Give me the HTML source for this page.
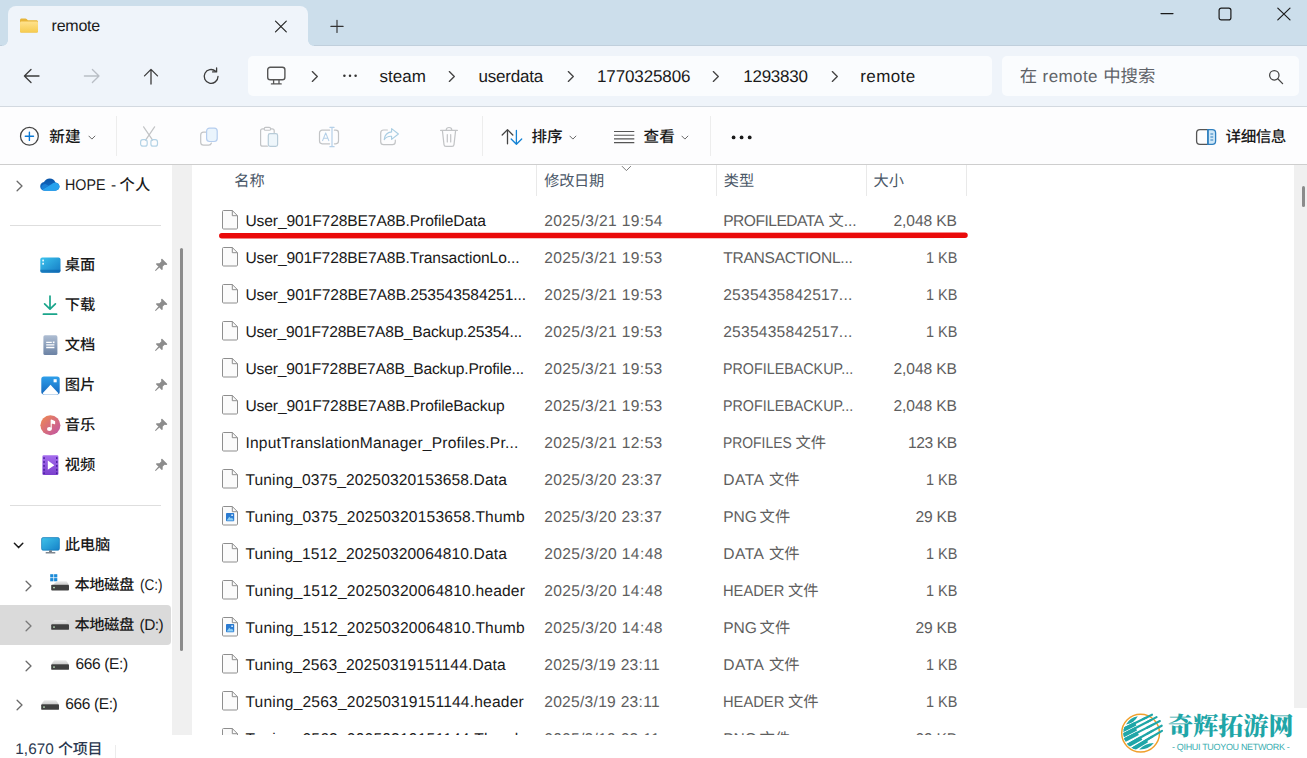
<!DOCTYPE html>
<html lang="zh-CN"><head><meta charset="utf-8"><title>remote - File Explorer</title>
<style>
html,body{margin:0;padding:0}
body{width:1307px;height:758px;overflow:hidden;position:relative;background:#fff;font-family:"Liberation Sans",sans-serif;color:#1a1a1a;text-rendering:geometricPrecision;-webkit-font-smoothing:antialiased}
.a{position:absolute}
.t{position:absolute;white-space:nowrap;line-height:1}
svg{display:block}
.mix{position:absolute;white-space:nowrap;line-height:1}
.c4{font-family:"Liberation Sans","Noto Sans CJK SC",sans-serif;font-weight:400}
.c5{font-family:"Liberation Sans","Noto Sans CJK SC",sans-serif;font-weight:500}
.cs{font-family:"Liberation Serif","Noto Serif CJK SC",serif;font-weight:900}
</style></head>
<body>
<svg width="0" height="0" style="position:absolute" aria-hidden="true"><defs>
<linearGradient id="gfold" x1="0" y1="0" x2="0" y2="1"><stop offset="0" stop-color="#ffe28e"/><stop offset="1" stop-color="#f6cb4e"/></linearGradient>
</defs></svg>
<div class="a" style="left:0px;top:0px;width:1307px;height:46px;background:#ccdeeb;"></div>
<div class="a" style="left:0px;top:46px;width:1307px;height:60px;background:#eff4fa;"></div>
<div class="a" style="left:8px;top:6px;width:300px;height:41px;background:#eff4fa;border-radius:8px 8px 0 0"></div>
<div class="a" style="left:2px;top:40px;width:6px;height:6px;background:radial-gradient(circle at 0 0,rgba(0,0,0,0) 5.6px,#eff4fa 6.2px)"></div>
<div class="a" style="left:308px;top:40px;width:6px;height:6px;background:radial-gradient(circle at 100% 0,rgba(0,0,0,0) 5.6px,#eff4fa 6.2px)"></div>
<div class="a" style="left:314px;top:45px;width:993px;height:1px;background:#c0cfdc;"></div>
<div class="a" style="left:0px;top:45px;width:2px;height:1px;background:#c0cfdc;"></div>
<svg class="a" aria-hidden="true" style="left:20px;top:18px;" width="18" height="15" viewBox="0 0 18 15"><path d="M0 2.1C0 1.2.7.5 1.6.5H5.4C5.9.5 6.3.7 6.6 1L7.9 2.3H16.4C17.3 2.3 18 3 18 3.9V13C18 13.9 17.3 14.6 16.4 14.6H1.6C.7 14.6 0 13.9 0 13Z" fill="#e7b53a"/><path d="M0 4.7C0 4 .6 3.4 1.3 3.4H16.7C17.4 3.4 18 4 18 4.7V13.2C18 14 17.4 14.6 16.6 14.6H1.4C.6 14.6 0 14 0 13.2Z" fill="url(#gfold)"/></svg>
<div class="t" style="top:18.96px;font-size:16px;color:#1a1a1a;letter-spacing:-0.249px;left:51.60px;">remote</div>
<svg class="a" aria-hidden="true" style="left:274px;top:20px;" width="14" height="13" viewBox="0 0 14 13"><path d="M1.5 1.2L12.3 11.8M12.3 1.2L1.5 11.8" stroke="#222" stroke-width="1.15" fill="none" stroke-linecap="round"/></svg>
<svg class="a" aria-hidden="true" style="left:330px;top:19px;" width="14" height="15" viewBox="0 0 14 15"><path d="M7 1.3V13.5M.9 7.4H13.1" stroke="#333" stroke-width="1.15" fill="none" stroke-linecap="round"/></svg>
<svg class="a" aria-hidden="true" style="left:1158px;top:6px;" width="16" height="16" viewBox="0 0 16 16"><path d="M3 7.6H15" stroke="#1a1a1a" stroke-width="1.2" fill="none" stroke-linecap="round"/></svg>
<svg class="a" aria-hidden="true" style="left:1217px;top:6px;" width="16" height="16" viewBox="0 0 16 16"><rect x="2.1" y="2.1" width="11.8" height="11.8" rx="2.2" stroke="#1a1a1a" stroke-width="1.2" fill="none"/></svg>
<svg class="a" aria-hidden="true" style="left:1276px;top:6px;" width="16" height="16" viewBox="0 0 16 16"><path d="M1.8 2.1L14 13.9M14 2.1L1.8 13.9" stroke="#1a1a1a" stroke-width="1.2" fill="none" stroke-linecap="round"/></svg>
<svg class="a" aria-hidden="true" style="left:22px;top:67px;" width="20" height="18" viewBox="0 0 20 18"><path d="M2.4 9H17M9 2.5L2.4 9L9 15.5" stroke="#3b3b3b" stroke-width="1.3" fill="none" stroke-linecap="round" stroke-linejoin="round"/></svg>
<svg class="a" aria-hidden="true" style="left:82px;top:67px;" width="20" height="18" viewBox="0 0 20 18"><path d="M2.4 9H17M10.4 2.5L17 9L10.4 15.5" stroke="#b9bec5" stroke-width="1.3" fill="none" stroke-linecap="round" stroke-linejoin="round"/></svg>
<svg class="a" aria-hidden="true" style="left:142px;top:67px;" width="18" height="18" viewBox="0 0 18 18"><path d="M9 2.4V17M2.5 8.9L9 2.4L15.5 8.9" stroke="#3b3b3b" stroke-width="1.3" fill="none" stroke-linecap="round" stroke-linejoin="round"/></svg>
<svg class="a" aria-hidden="true" style="left:201px;top:66px;" width="20" height="20" viewBox="0 0 20 20"><path d="M17 10.5A6.9 6.9 0 1 1 14.6 5.2" stroke="#3b3b3b" stroke-width="1.3" fill="none" stroke-linecap="round"/><path d="M15.6 1.9V5.9H11.6" stroke="#3b3b3b" stroke-width="1.3" fill="none" stroke-linecap="round" stroke-linejoin="round"/></svg>
<div class="a" style="left:248px;top:56px;width:744px;height:40px;background:#fafcfe;border-radius:5px"></div>
<div class="a" style="left:1002px;top:56px;width:297px;height:40px;background:#fafcfe;border-radius:5px"></div>
<svg class="a" aria-hidden="true" style="left:266px;top:65px;" width="21" height="21" viewBox="0 0 21 21"><rect x="1.7" y="2.2" width="17.2" height="12.6" rx="2.6" stroke="#555" stroke-width="1.4" fill="none"/><path d="M7.6 15V18.6M13 15V18.6M5.4 18.9H15.2" stroke="#555" stroke-width="1.3" fill="none" stroke-linecap="round"/></svg>
<svg class="a" aria-hidden="true" style="left:310.5px;top:70px;" width="8" height="13" viewBox="0 0 8 13"><path d="M1.3 1.6L6.3 6.5L1.3 11.4" stroke="#444" stroke-width="1.35" fill="none" stroke-linecap="round" stroke-linejoin="round"/></svg>
<svg class="a" aria-hidden="true" style="left:448.3px;top:70px;" width="8" height="13" viewBox="0 0 8 13"><path d="M1.3 1.6L6.3 6.5L1.3 11.4" stroke="#444" stroke-width="1.35" fill="none" stroke-linecap="round" stroke-linejoin="round"/></svg>
<svg class="a" aria-hidden="true" style="left:566.5px;top:70px;" width="8" height="13" viewBox="0 0 8 13"><path d="M1.3 1.6L6.3 6.5L1.3 11.4" stroke="#444" stroke-width="1.35" fill="none" stroke-linecap="round" stroke-linejoin="round"/></svg>
<svg class="a" aria-hidden="true" style="left:712.3px;top:70px;" width="8" height="13" viewBox="0 0 8 13"><path d="M1.3 1.6L6.3 6.5L1.3 11.4" stroke="#444" stroke-width="1.35" fill="none" stroke-linecap="round" stroke-linejoin="round"/></svg>
<svg class="a" aria-hidden="true" style="left:830.8px;top:70px;" width="8" height="13" viewBox="0 0 8 13"><path d="M1.3 1.6L6.3 6.5L1.3 11.4" stroke="#444" stroke-width="1.35" fill="none" stroke-linecap="round" stroke-linejoin="round"/></svg>
<svg class="a" aria-hidden="true" style="left:341px;top:72px;" width="18" height="8" viewBox="0 0 18 8"><circle cx="3.4" cy="3.8" r="1.25" fill="#333"/><circle cx="9" cy="3.8" r="1.25" fill="#333"/><circle cx="14.6" cy="3.8" r="1.25" fill="#333"/></svg>
<div class="t" style="top:67.51px;font-size:17px;color:#1a1a1a;letter-spacing:-0.019px;left:379.60px;">steam</div>
<div class="t" style="top:67.51px;font-size:17px;color:#1a1a1a;letter-spacing:-0.195px;left:478.40px;">userdata</div>
<div class="t" style="top:67.51px;font-size:17px;color:#1a1a1a;letter-spacing:-0.125px;left:597.00px;">1770325806</div>
<div class="t" style="top:67.51px;font-size:17px;color:#1a1a1a;letter-spacing:-0.226px;left:743.20px;">1293830</div>
<div class="t" style="top:67.51px;font-size:17px;color:#1a1a1a;letter-spacing:0.415px;left:860.20px;">remote</div>
<div class="t c4" style="left:1019.80px;top:68.00px;font-size:17.4px;color:#5f6368;">在</div>
<div class="t" style="top:67.51px;font-size:17px;color:#5f6368;letter-spacing:0.415px;left:1042.60px;">remote</div>
<div class="t c4" style="left:1103.20px;top:68.00px;font-size:17.4px;color:#5f6368;">中搜索</div>
<svg class="a" aria-hidden="true" style="left:1267px;top:68px;" width="18" height="18" viewBox="0 0 18 18"><circle cx="7.3" cy="7.3" r="4.7" stroke="#444" stroke-width="1.25" fill="none"/><path d="M10.8 10.8L15.6 15.6" stroke="#444" stroke-width="1.3" stroke-linecap="round"/></svg>
<div class="a" style="left:0px;top:106px;width:1307px;height:1px;background:#d3d9e0;"></div>
<div class="a" style="left:0px;top:107px;width:1307px;height:57px;background:#fdfdfe;"></div>
<div class="a" style="left:0px;top:164px;width:1307px;height:1px;background:#cecece;"></div>
<svg class="a" aria-hidden="true" style="left:19px;top:126px;" width="21" height="21" viewBox="0 0 21 21"><circle cx="10.4" cy="10.3" r="8.9" stroke="#444" stroke-width="1.25" fill="none"/><path d="M10.4 6.2V14.4M6.3 10.3H14.5" stroke="#0a78d4" stroke-width="1.4" stroke-linecap="round" fill="none"/></svg>
<div class="t c5" style="left:49.30px;top:129.90px;font-size:15.6px;color:#1a1a1a;">新建</div>
<svg class="a" aria-hidden="true" style="left:87.5px;top:134.6px;" width="8" height="6" viewBox="0 0 8 6"><path d="M.9 1.1L3.9 4.1L6.9 1.1" stroke="#6a6a6a" stroke-width="1" fill="none" stroke-linecap="round" stroke-linejoin="round"/></svg>
<div class="a" style="left:116px;top:116px;width:1px;height:40px;background:#ededed;"></div>
<svg class="a" aria-hidden="true" style="left:139px;top:125px;" width="20" height="23" viewBox="0 0 20 23"><path d="M4.6 1.8L13.6 15.2M15.6 1.8L6.6 15.2" stroke="#c2c4c6" stroke-width="1.2" fill="none" stroke-linecap="round"/>
<rect x="1.6" y="14.6" width="6.6" height="6.6" rx="2.3" stroke="#b4d3e6" stroke-width="1.2" fill="none"/>
<rect x="11.9" y="14.6" width="6.6" height="6.6" rx="2.3" stroke="#b4d3e6" stroke-width="1.2" fill="none"/></svg>
<svg class="a" aria-hidden="true" style="left:199px;top:126px;" width="20" height="21" viewBox="0 0 20 21"><path d="M6.6 6.2H4.6C3 6.2 1.7 7.5 1.7 9.1V16.3C1.7 17.9 3 19.2 4.6 19.2H9.6C11 19.2 12.1 18.3 12.4 17" stroke="#c2c4c6" stroke-width="1.2" fill="none" stroke-linecap="round"/>
<rect x="7.6" y="2.1" width="10.6" height="13.4" rx="3" stroke="#b5cdee" stroke-width="1.2" fill="#eaf4fc"/></svg>
<svg class="a" aria-hidden="true" style="left:259px;top:126px;" width="20" height="22" viewBox="0 0 20 22"><path d="M8.4 20.2H3.6C2.5 20.2 1.6 19.3 1.6 18.2V4.8C1.6 3.7 2.5 2.8 3.6 2.8H5.2M11.6 2.8H13.2C14.3 2.8 15.2 3.7 15.2 4.8V6.6" stroke="#c2c4c6" stroke-width="1.2" fill="none" stroke-linecap="round"/>
<rect x="5.2" y="1.4" width="6.4" height="2.9" rx="1.4" stroke="#c2c4c6" stroke-width="1.1" fill="none"/>
<rect x="9.3" y="7.6" width="9.3" height="12.7" rx="1.8" stroke="#b7cbd8" stroke-width="1.2" fill="#eef6fb"/></svg>
<svg class="a" aria-hidden="true" style="left:318px;top:126px;" width="22" height="22" viewBox="0 0 22 22"><path d="M11.6 4.2H4.2C2.7 4.2 1.5 5.4 1.5 6.9V15.1C1.5 16.6 2.7 17.8 4.2 17.8H11.6M16.4 4.2H17.8C19.3 4.2 20.5 5.4 20.5 6.9V15.1C20.5 16.6 19.3 17.8 17.8 17.8H16.4" stroke="#c2c4c6" stroke-width="1.2" fill="none" stroke-linecap="round"/>
<path d="M14 1.4V20.6M11.9 1.3H16.1M11.9 20.7H16.1" stroke="#b5d0e8" stroke-width="1.2" fill="none" stroke-linecap="round"/>
<path d="M4.6 14.6L7.7 6.9L10.8 14.6M5.6 12.2H9.8" stroke="#b5d0e8" stroke-width="1.1" fill="none" stroke-linecap="round" stroke-linejoin="round"/></svg>
<svg class="a" aria-hidden="true" style="left:379px;top:127px;" width="22" height="20" viewBox="0 0 22 20"><path d="M8.4 3H4.6C3 3 1.7 4.3 1.7 5.9V14.7C1.7 16.3 3 17.6 4.6 17.6H13.4C15 17.6 16.3 16.3 16.3 14.7V13.2" stroke="#c2c4c6" stroke-width="1.2" fill="none" stroke-linecap="round"/>
<path d="M12.6 1.6L19.4 7L12.6 12.4V9.3C9 9.1 6.8 10.3 5.2 12.6C5.6 8.4 8 5.4 12.6 4.9Z" stroke="#a9cde2" stroke-width="1.1" fill="none" stroke-linejoin="round"/></svg>
<svg class="a" aria-hidden="true" style="left:439px;top:126px;" width="20" height="22" viewBox="0 0 20 22"><path d="M1.6 4.4H18.4M7.2 4.2C7.2 2.6 8.4 1.5 10 1.5C11.6 1.5 12.8 2.6 12.8 4.2" stroke="#c2c4c6" stroke-width="1.2" fill="none" stroke-linecap="round"/>
<path d="M3.4 4.6L5 18.6C5.1 19.7 6 20.4 7 20.4H13C14 20.4 14.9 19.7 15 18.6L16.6 4.6" stroke="#c2c4c6" stroke-width="1.2" fill="none" stroke-linecap="round" stroke-linejoin="round"/>
<path d="M8.3 8.6V16M11.7 8.6V16" stroke="#c2c4c6" stroke-width="1.2" fill="none" stroke-linecap="round"/></svg>
<div class="a" style="left:482px;top:116px;width:1px;height:40px;background:#ededed;"></div>
<svg class="a" aria-hidden="true" style="left:500px;top:128px;" width="24" height="18" viewBox="0 0 24 18"><path d="M7.5 15.8V1.8M2.2 7L7.5 1.6L12.8 7" stroke="#444" stroke-width="1.3" fill="none" stroke-linecap="round" stroke-linejoin="round"/>
<path d="M16.4 2.4V16.2M11.2 11L16.4 16.3L21.7 11" stroke="#1482d4" stroke-width="1.3" fill="none" stroke-linecap="round" stroke-linejoin="round"/></svg>
<div class="t c5" style="left:531.50px;top:129.90px;font-size:15.6px;color:#1a1a1a;">排序</div>
<svg class="a" aria-hidden="true" style="left:569.2px;top:134.6px;" width="8" height="6" viewBox="0 0 8 6"><path d="M.9 1.1L3.9 4.1L6.9 1.1" stroke="#6a6a6a" stroke-width="1" fill="none" stroke-linecap="round" stroke-linejoin="round"/></svg>
<svg class="a" aria-hidden="true" style="left:613px;top:130px;" width="22" height="14" viewBox="0 0 22 14"><path d="M1 1.5H21.3M1 5.2H21.3M1 8.9H21.3M1 12.6H21.3" stroke="#555" stroke-width="1.15" fill="none"/></svg>
<div class="t c5" style="left:643.60px;top:129.90px;font-size:15.6px;color:#1a1a1a;">查看</div>
<svg class="a" aria-hidden="true" style="left:680.8px;top:134.6px;" width="8" height="6" viewBox="0 0 8 6"><path d="M.9 1.1L3.9 4.1L6.9 1.1" stroke="#6a6a6a" stroke-width="1" fill="none" stroke-linecap="round" stroke-linejoin="round"/></svg>
<div class="a" style="left:710px;top:116px;width:1px;height:40px;background:#ededed;"></div>
<svg class="a" aria-hidden="true" style="left:730px;top:134px;" width="24" height="7" viewBox="0 0 24 7"><circle cx="3.6" cy="3.4" r="1.9" fill="#1a1a1a"/><circle cx="11.6" cy="3.4" r="1.9" fill="#1a1a1a"/><circle cx="19.7" cy="3.4" r="1.9" fill="#1a1a1a"/></svg>
<svg class="a" aria-hidden="true" style="left:1195px;top:128px;" width="22" height="18" viewBox="0 0 22 18"><rect x="13" y="1.8" width="7.6" height="14.4" fill="#cfe7f7"/>
<path d="M13 1.6H5C3.1 1.6 1.6 3.1 1.6 5V13C1.6 14.9 3.1 16.4 5 16.4H13" stroke="#555" stroke-width="1.3" fill="none"/>
<path d="M12.9 1.6H17.2C19.1 1.6 20.6 3.1 20.6 5V13C20.6 14.9 19.1 16.4 17.2 16.4H12.9Z" stroke="#2f7fbf" stroke-width="1.3" fill="none"/>
<path d="M12.9 1.6V16.4" stroke="#2f7fbf" stroke-width="1.5"/>
<path d="M15.4 6H18.2M15.4 9H18.2M15.4 12H18.2" stroke="#2f7fbf" stroke-width="1.1"/></svg>
<div class="t c5" style="left:1225.60px;top:129.90px;font-size:15.6px;color:#1a1a1a;letter-spacing:-0.546px;">详细信息</div>
<div class="a" style="left:172px;top:165px;width:20px;height:570px;background:#f0f0f0;"></div>
<div class="a" style="left:180px;top:248px;width:3px;height:403px;background:#8b8b8b;border-radius:1.5px"></div>
<svg width="0" height="0" style="position:absolute" aria-hidden="true"><defs>
<linearGradient id="gcloud" x1="0" y1="0" x2="0" y2="1"><stop offset="0" stop-color="#0a55a8"/><stop offset="1" stop-color="#1472cc"/></linearGradient>
<linearGradient id="gdesk" x1="0" y1="0" x2="1" y2="1"><stop offset="0" stop-color="#3cc4ee"/><stop offset="1" stop-color="#147ac4"/></linearGradient>
<linearGradient id="gdoc" x1="0" y1="0" x2="0" y2="1"><stop offset="0" stop-color="#aebdd2"/><stop offset="1" stop-color="#6b82a4"/></linearGradient>
<linearGradient id="gpic" x1="0" y1="0" x2="0" y2="1"><stop offset="0" stop-color="#2e9fea"/><stop offset="1" stop-color="#1468bf"/></linearGradient>
<linearGradient id="gmus" x1="0" y1="0" x2="1" y2="1"><stop offset="0" stop-color="#f08a4e"/><stop offset="1" stop-color="#bf52a8"/></linearGradient>
<linearGradient id="gvid" x1="0" y1="0" x2="0" y2="1"><stop offset="0" stop-color="#a56cee"/><stop offset="1" stop-color="#7a3fcc"/></linearGradient>
<linearGradient id="gpc" x1="0" y1="0" x2="1" y2="1"><stop offset="0" stop-color="#3fc3ea"/><stop offset="1" stop-color="#1581c8"/></linearGradient>
<linearGradient id="gdrv" x1="0" y1="0" x2="0" y2="1"><stop offset="0" stop-color="#ececec"/><stop offset="1" stop-color="#cbcbcb"/></linearGradient>
</defs></svg>
<svg class="a" aria-hidden="true" style="left:15.8px;top:179.6px;" width="8" height="12" viewBox="0 0 8 12"><path d="M1.1 1.2L6 6L1.1 10.8" stroke="#6b6b6b" stroke-width="1.3" fill="none" stroke-linecap="round" stroke-linejoin="round"/></svg>
<svg class="a" aria-hidden="true" style="left:39.7px;top:177.7px;" width="20" height="13.33" viewBox="0 0 21 14"><path d="M5 13.4C2.3 13.4 .2 11.4 .2 8.8C.2 6.5 1.9 4.6 4.2 4.3C5.2 2 7.5 .4 10.2 .4C13 .4 15.3 2.1 16.2 4.6C18.6 4.8 20.5 6.7 20.5 9C20.5 11.4 18.5 13.4 16 13.4Z" fill="url(#gcloud)"/><path d="M2.6 12.2L12 6.6C13 5.4 14.4 4.7 16.2 4.6C18.6 4.8 20.5 6.7 20.5 9C20.5 11.4 18.5 13.4 16 13.4H5C4 13.4 3.2 13 2.6 12.2Z" fill="#27a2ee"/><path d="M2.6 12.2L9.2 8.2L5.6 6.4C3.6 6.6 1.6 8 1.4 10.2C1.5 11 2 11.7 2.6 12.2Z" fill="#1b86dc" opacity=".8"/></svg>
<div class="t" style="top:178.18px;left:64.60px;font-size:15.5px;color:#1a1a1a;transform:scaleX(0.9197);transform-origin:0 50%;">HOPE</div>
<div class="t" style="top:178.18px;font-size:15.5px;color:#1a1a1a;left:111.00px;">-</div>
<div class="t c5" style="left:119.60px;top:178.00px;font-size:15.3px;color:#1a1a1a;">个人</div>
<div class="a" style="left:10px;top:225px;width:151px;height:1px;background:#dedede;"></div>
<div class="t c5" style="left:64.80px;top:257.80px;font-size:15.3px;color:#1a1a1a;">桌面</div>
<svg class="a" aria-hidden="true" style="left:150.5px;top:257.1px;" width="18" height="18" viewBox="0 0 18 18"><g transform="rotate(45 9 9) translate(9 9) scale(.93 .78) translate(-8.5 -8.85)" fill="#8c8c8c"><path d="M4.9 .3H12.1C12.5 .3 12.7 .6 12.7 1V1.6C12.7 1.9 12.5 2.2 12.3 2.4L11 3.4V6.9L12.9 9.3C13.1 9.6 13.2 9.9 13.2 10.2C13.2 10.6 12.9 10.9 12.5 10.9H4.5C4.1 10.9 3.8 10.6 3.8 10.2C3.8 9.9 3.9 9.6 4.1 9.3L6 6.9V3.4L4.7 2.4C4.5 2.2 4.3 1.9 4.3 1.6V1C4.3 .6 4.5 .3 4.9 .3Z"/><path d="M7.7 10.8H9.3L8.95 17.2C8.9 17.6 8.1 17.6 8.05 17.2Z"/></g></svg>
<div class="t c5" style="left:64.80px;top:297.80px;font-size:15.3px;color:#1a1a1a;">下载</div>
<svg class="a" aria-hidden="true" style="left:150.5px;top:297.1px;" width="18" height="18" viewBox="0 0 18 18"><g transform="rotate(45 9 9) translate(9 9) scale(.93 .78) translate(-8.5 -8.85)" fill="#8c8c8c"><path d="M4.9 .3H12.1C12.5 .3 12.7 .6 12.7 1V1.6C12.7 1.9 12.5 2.2 12.3 2.4L11 3.4V6.9L12.9 9.3C13.1 9.6 13.2 9.9 13.2 10.2C13.2 10.6 12.9 10.9 12.5 10.9H4.5C4.1 10.9 3.8 10.6 3.8 10.2C3.8 9.9 3.9 9.6 4.1 9.3L6 6.9V3.4L4.7 2.4C4.5 2.2 4.3 1.9 4.3 1.6V1C4.3 .6 4.5 .3 4.9 .3Z"/><path d="M7.7 10.8H9.3L8.95 17.2C8.9 17.6 8.1 17.6 8.05 17.2Z"/></g></svg>
<div class="t c5" style="left:64.80px;top:337.80px;font-size:15.3px;color:#1a1a1a;">文档</div>
<svg class="a" aria-hidden="true" style="left:150.5px;top:337.1px;" width="18" height="18" viewBox="0 0 18 18"><g transform="rotate(45 9 9) translate(9 9) scale(.93 .78) translate(-8.5 -8.85)" fill="#8c8c8c"><path d="M4.9 .3H12.1C12.5 .3 12.7 .6 12.7 1V1.6C12.7 1.9 12.5 2.2 12.3 2.4L11 3.4V6.9L12.9 9.3C13.1 9.6 13.2 9.9 13.2 10.2C13.2 10.6 12.9 10.9 12.5 10.9H4.5C4.1 10.9 3.8 10.6 3.8 10.2C3.8 9.9 3.9 9.6 4.1 9.3L6 6.9V3.4L4.7 2.4C4.5 2.2 4.3 1.9 4.3 1.6V1C4.3 .6 4.5 .3 4.9 .3Z"/><path d="M7.7 10.8H9.3L8.95 17.2C8.9 17.6 8.1 17.6 8.05 17.2Z"/></g></svg>
<div class="t c5" style="left:64.80px;top:377.80px;font-size:15.3px;color:#1a1a1a;">图片</div>
<svg class="a" aria-hidden="true" style="left:150.5px;top:377.1px;" width="18" height="18" viewBox="0 0 18 18"><g transform="rotate(45 9 9) translate(9 9) scale(.93 .78) translate(-8.5 -8.85)" fill="#8c8c8c"><path d="M4.9 .3H12.1C12.5 .3 12.7 .6 12.7 1V1.6C12.7 1.9 12.5 2.2 12.3 2.4L11 3.4V6.9L12.9 9.3C13.1 9.6 13.2 9.9 13.2 10.2C13.2 10.6 12.9 10.9 12.5 10.9H4.5C4.1 10.9 3.8 10.6 3.8 10.2C3.8 9.9 3.9 9.6 4.1 9.3L6 6.9V3.4L4.7 2.4C4.5 2.2 4.3 1.9 4.3 1.6V1C4.3 .6 4.5 .3 4.9 .3Z"/><path d="M7.7 10.8H9.3L8.95 17.2C8.9 17.6 8.1 17.6 8.05 17.2Z"/></g></svg>
<div class="t c5" style="left:64.80px;top:417.80px;font-size:15.3px;color:#1a1a1a;">音乐</div>
<svg class="a" aria-hidden="true" style="left:150.5px;top:417.1px;" width="18" height="18" viewBox="0 0 18 18"><g transform="rotate(45 9 9) translate(9 9) scale(.93 .78) translate(-8.5 -8.85)" fill="#8c8c8c"><path d="M4.9 .3H12.1C12.5 .3 12.7 .6 12.7 1V1.6C12.7 1.9 12.5 2.2 12.3 2.4L11 3.4V6.9L12.9 9.3C13.1 9.6 13.2 9.9 13.2 10.2C13.2 10.6 12.9 10.9 12.5 10.9H4.5C4.1 10.9 3.8 10.6 3.8 10.2C3.8 9.9 3.9 9.6 4.1 9.3L6 6.9V3.4L4.7 2.4C4.5 2.2 4.3 1.9 4.3 1.6V1C4.3 .6 4.5 .3 4.9 .3Z"/><path d="M7.7 10.8H9.3L8.95 17.2C8.9 17.6 8.1 17.6 8.05 17.2Z"/></g></svg>
<div class="t c5" style="left:64.80px;top:457.80px;font-size:15.3px;color:#1a1a1a;">视频</div>
<svg class="a" aria-hidden="true" style="left:150.5px;top:457.1px;" width="18" height="18" viewBox="0 0 18 18"><g transform="rotate(45 9 9) translate(9 9) scale(.93 .78) translate(-8.5 -8.85)" fill="#8c8c8c"><path d="M4.9 .3H12.1C12.5 .3 12.7 .6 12.7 1V1.6C12.7 1.9 12.5 2.2 12.3 2.4L11 3.4V6.9L12.9 9.3C13.1 9.6 13.2 9.9 13.2 10.2C13.2 10.6 12.9 10.9 12.5 10.9H4.5C4.1 10.9 3.8 10.6 3.8 10.2C3.8 9.9 3.9 9.6 4.1 9.3L6 6.9V3.4L4.7 2.4C4.5 2.2 4.3 1.9 4.3 1.6V1C4.3 .6 4.5 .3 4.9 .3Z"/><path d="M7.7 10.8H9.3L8.95 17.2C8.9 17.6 8.1 17.6 8.05 17.2Z"/></g></svg>
<svg class="a" aria-hidden="true" style="left:39.5px;top:257px;" width="21" height="16" viewBox="0 0 21 16"><rect x=".3" y=".4" width="20.2" height="15.4" rx="2" fill="url(#gdesk)"/><path d="M.3 12.8H20.5V13.8C20.5 14.9 19.6 15.8 18.5 15.8H2.3C1.2 15.8 .3 14.9 .3 13.8Z" fill="#0c5fa8" opacity=".55"/><rect x="2.2" y="2.6" width="1.8" height="1.8" fill="#dff4fc"/><rect x="2.2" y="5.8" width="1.8" height="1.8" fill="#dff4fc"/></svg>
<svg class="a" aria-hidden="true" style="left:42px;top:295px;" width="16" height="21" viewBox="0 0 16 21"><path d="M8 1V14M2.6 8.8L8 14.2L13.4 8.8M1.4 19.2H14.6" stroke="#1aa58b" stroke-width="1.7" fill="none" stroke-linecap="round" stroke-linejoin="round"/></svg>
<svg class="a" aria-hidden="true" style="left:42.5px;top:335px;" width="15" height="20.5" viewBox="0 0 15 20.5"><rect x=".4" y=".3" width="14" height="19.8" rx="1.6" fill="url(#gdoc)"/><path d="M3.2 7.3H8.8M3.2 9.9H11.4M3.2 12.5H11.4" stroke="#fff" stroke-width="1.3"/><rect x="9.8" y="6.5" width="1.7" height="1.7" fill="#fff"/></svg>
<svg class="a" aria-hidden="true" style="left:40.5px;top:375.6px;" width="19" height="19" viewBox="0 0 19 19"><rect x=".3" y=".4" width="18.4" height="18" rx="2.6" fill="url(#gpic)"/><path d="M1.6 17.2L9.5 8.8L17.4 17.2C17 17.9 16.4 18.4 15.6 18.4H3.4C2.6 18.4 2 17.9 1.6 17.2Z" fill="#fff"/><rect x="12.6" y="3.2" width="3.1" height="3.1" fill="#fff"/></svg>
<svg class="a" aria-hidden="true" style="left:39.5px;top:415px;" width="21" height="21" viewBox="0 0 21 21"><circle cx="10.4" cy="10.3" r="10" fill="url(#gmus)"/><ellipse cx="9.4" cy="14.1" rx="2.4" ry="2" fill="#fff"/><path d="M11.2 14.2V5.1L14.6 6.6V8.8L11.2 7.4" fill="#fff" stroke="#fff" stroke-width="1.1" stroke-linejoin="round"/></svg>
<svg class="a" aria-hidden="true" style="left:41.6px;top:455px;" width="17" height="20.5" viewBox="0 0 17 20.5"><rect x=".4" y=".3" width="16" height="19.8" rx="1.4" fill="url(#gvid)"/><path d="M5.8 5.6L12.4 10.2L5.8 14.8Z" fill="#fff"/><g fill="#4a1fa0"><rect x="1.3" y="2.2" width="1.5" height="1.8"/><rect x="1.3" y="6.1" width="1.5" height="1.8"/><rect x="1.3" y="10" width="1.5" height="1.8"/><rect x="1.3" y="13.9" width="1.5" height="1.8"/><rect x="1.3" y="17.4" width="1.5" height="1.6"/><rect x="14" y="2.2" width="1.5" height="1.8"/><rect x="14" y="6.1" width="1.5" height="1.8"/><rect x="14" y="10" width="1.5" height="1.8"/><rect x="14" y="13.9" width="1.5" height="1.8"/><rect x="14" y="17.4" width="1.5" height="1.6"/></g></svg>
<div class="a" style="left:10px;top:505px;width:151px;height:1px;background:#dedede;"></div>
<svg class="a" aria-hidden="true" style="left:13px;top:541px;" width="12" height="9" viewBox="0 0 12 9"><path d="M1.4 2.2L5.6 6.6L9.8 2.2" stroke="#1a1a1a" stroke-width="1.5" fill="none" stroke-linecap="round" stroke-linejoin="round"/></svg>
<svg class="a" aria-hidden="true" style="left:40.5px;top:536.5px;" width="19" height="17" viewBox="0 0 19 17"><rect x=".6" y=".6" width="17.8" height="12.6" rx="1.5" fill="url(#gpc)" stroke="#1478b8" stroke-width=".7"/><rect x="8.1" y="13.4" width="2.8" height="2" fill="#6e7780"/><rect x="4.6" y="15.1" width="9.8" height="1.4" rx=".5" fill="#7f8790"/></svg>
<div class="t c5" style="left:64.80px;top:538.00px;font-size:15.3px;color:#1a1a1a;letter-spacing:-0.23px;">此电脑</div>
<svg class="a" aria-hidden="true" style="left:25.4px;top:579.6px;" width="8" height="12" viewBox="0 0 8 12"><path d="M1.1 1.2L6 6L1.1 10.8" stroke="#6b6b6b" stroke-width="1.3" fill="none" stroke-linecap="round" stroke-linejoin="round"/></svg>
<svg class="a" aria-hidden="true" style="left:49.5px;top:574.3px;" width="8" height="8" viewBox="0 0 8 8"><g fill="#1b8ad8"><rect x=".2" y=".2" width="3.2" height="3.2"/><rect x="4.1" y=".2" width="3.2" height="3.2"/><rect x=".2" y="4.1" width="3.2" height="3.2"/><rect x="4.1" y="4.1" width="3.2" height="3.2"/></g></svg>
<svg class="a" aria-hidden="true" style="left:51px;top:580.6px;" width="18.4" height="10" viewBox="0 0 18.4 10"><path d="M6 .3H15.6L18 3.8H.2L2 3.8Z" fill="url(#gdrv)"/><rect x=".2" y="3.7" width="17.8" height="5.8" rx=".9" fill="#404040"/><rect x="2.2" y="5.9" width="1.6" height="1.4" fill="#bfe8c0"/></svg>
<div class="t c5" style="left:74.60px;top:578.00px;font-size:15.3px;color:#1a1a1a;letter-spacing:-0.536px;">本地磁盘</div>
<div class="t" style="top:578.08px;left:139.60px;font-size:15.5px;color:#1a1a1a;transform:scaleX(0.8752);transform-origin:0 50%;">(C:)</div>
<div class="a" style="left:0;top:605px;width:171px;height:40px;background:#dadada;border-radius:0 4px 4px 0"></div>
<svg class="a" aria-hidden="true" style="left:25.4px;top:619.6px;" width="8" height="12" viewBox="0 0 8 12"><path d="M1.1 1.2L6 6L1.1 10.8" stroke="#7a7a7a" stroke-width="1.3" fill="none" stroke-linecap="round" stroke-linejoin="round"/></svg>
<svg class="a" aria-hidden="true" style="left:51px;top:619.8px;" width="18.4" height="10" viewBox="0 0 18.4 10"><path d="M3.2 .3H15L18 4.4H.2Z" fill="url(#gdrv)"/><rect x=".2" y="4.3" width="17.8" height="5.5" rx=".9" fill="#404040"/><rect x="2.2" y="6.4" width="1.6" height="1.4" fill="#bfe8c0"/></svg>
<div class="t c5" style="left:74.60px;top:618.00px;font-size:15.3px;color:#1a1a1a;letter-spacing:-0.536px;">本地磁盘</div>
<div class="t" style="top:618.08px;font-size:15.5px;color:#1a1a1a;letter-spacing:-0.556px;left:139.60px;">(D:)</div>
<svg class="a" aria-hidden="true" style="left:25.4px;top:659.6px;" width="8" height="12" viewBox="0 0 8 12"><path d="M1.1 1.2L6 6L1.1 10.8" stroke="#6b6b6b" stroke-width="1.3" fill="none" stroke-linecap="round" stroke-linejoin="round"/></svg>
<svg class="a" aria-hidden="true" style="left:51px;top:660.2px;" width="18.4" height="10" viewBox="0 0 18.4 10"><path d="M3.2 .3H15L18 4.4H.2Z" fill="url(#gdrv)"/><rect x=".2" y="4.3" width="17.8" height="5.5" rx=".9" fill="#404040"/><rect x="2.2" y="6.4" width="1.6" height="1.4" fill="#bfe8c0"/></svg>
<div class="t" style="top:657.48px;font-size:15.5px;color:#1a1a1a;letter-spacing:-0.367px;left:75.60px;">666 (E:)</div>
<svg class="a" aria-hidden="true" style="left:16px;top:699.4px;" width="8" height="12" viewBox="0 0 8 12"><path d="M1.1 1.2L6 6L1.1 10.8" stroke="#6b6b6b" stroke-width="1.3" fill="none" stroke-linecap="round" stroke-linejoin="round"/></svg>
<svg class="a" aria-hidden="true" style="left:40.7px;top:700px;" width="18.4" height="10" viewBox="0 0 18.4 10"><path d="M3.2 .3H15L18 4.4H.2Z" fill="url(#gdrv)"/><rect x=".2" y="4.3" width="17.8" height="5.5" rx=".9" fill="#404040"/><rect x="2.2" y="6.4" width="1.6" height="1.4" fill="#bfe8c0"/></svg>
<div class="t" style="top:697.28px;font-size:15.5px;color:#1a1a1a;letter-spacing:-0.367px;left:65.20px;">666 (E:)</div>
<div class="a" style="left:1294px;top:165px;width:13px;height:543px;background:#f0f0f0;"></div>
<div class="a" style="left:1302px;top:186px;width:3px;height:21px;background:#8b8b8b;border-radius:1.5px"></div>
<div class="t c4" style="left:234.20px;top:173.60px;font-size:15.2px;color:#4b5868;">名称</div>
<div class="t c4" style="left:544.20px;top:173.60px;font-size:15.2px;color:#4b5868;letter-spacing:-0.228px;">修改日期</div>
<div class="t c4" style="left:723.80px;top:173.60px;font-size:15.2px;color:#4b5868;">类型</div>
<div class="t c4" style="left:873.60px;top:173.60px;font-size:15.2px;color:#4b5868;">大小</div>
<div class="a" style="left:536px;top:165px;width:1px;height:31px;background:#e9e9e9;"></div>
<div class="a" style="left:716px;top:165px;width:1px;height:31px;background:#e9e9e9;"></div>
<div class="a" style="left:866px;top:165px;width:1px;height:31px;background:#e9e9e9;"></div>
<div class="a" style="left:966px;top:165px;width:1px;height:31px;background:#e9e9e9;"></div>
<svg class="a" aria-hidden="true" style="left:621px;top:165px;" width="11" height="8" viewBox="0 0 11 8"><path d="M1.2 1.4L5.4 5.6L9.6 1.4" stroke="#7a7a7a" stroke-width="1" fill="none" stroke-linecap="round" stroke-linejoin="round"/></svg>
<div class="a" style="left:192px;top:196px;width:1102px;height:539px;overflow:hidden">
<svg class="a" aria-hidden="true" style="left:30px;top:14px" width="16" height="20" viewBox="0 0 16 20"><path d="M1.5 .5H10.3L15.5 5.7V18C15.5 18.6 15.1 19 14.5 19H1.5C.9 19 .5 18.6 .5 18V1.5C.5 .9 .9 .5 1.5 .5Z" fill="#fbfbfb" stroke="#8e8e8e" stroke-width="1"/><path d="M10.3 .5V5.7H15.5" fill="none" stroke="#8e8e8e" stroke-width="1" stroke-linejoin="round"/></svg>
<div class="t" style="top:17.59px;font-size:15.6px;color:#1a1a1a;letter-spacing:-0.106px;left:53.40px;">User_901F728BE7A8B.ProfileData</div>
<div class="t" style="top:17.59px;font-size:15.6px;color:#5e5e5e;letter-spacing:0.389px;left:352.20px;">2025/3/21 19:54</div>
<div class="t" style="top:17.59px;font-size:15.6px;color:#5e5e5e;letter-spacing:-0.514px;left:531.20px;">PROFILEDATA</div>
<div class="t c4" style="left:636.60px;top:18.10px;font-size:15.3px;color:#5e5e5e;">文</div>
<div class="t" style="top:17.59px;font-size:15.6px;color:#5e5e5e;letter-spacing:-0.168px;left:651.80px;">...</div>
<div class="t" style="top:17.59px;font-size:15.6px;color:#5e5e5e;letter-spacing:-0.098px;left:701.50px;">2,048 KB</div>
<svg class="a" aria-hidden="true" style="left:30px;top:51px" width="16" height="20" viewBox="0 0 16 20"><path d="M1.5 .5H10.3L15.5 5.7V18C15.5 18.6 15.1 19 14.5 19H1.5C.9 19 .5 18.6 .5 18V1.5C.5 .9 .9 .5 1.5 .5Z" fill="#fbfbfb" stroke="#8e8e8e" stroke-width="1"/><path d="M10.3 .5V5.7H15.5" fill="none" stroke="#8e8e8e" stroke-width="1" stroke-linejoin="round"/></svg>
<div class="t" style="top:54.59px;font-size:15.6px;color:#1a1a1a;letter-spacing:-0.105px;left:53.40px;">User_901F728BE7A8B.TransactionLo...</div>
<div class="t" style="top:54.59px;font-size:15.6px;color:#5e5e5e;letter-spacing:0.375px;left:352.20px;">2025/3/21 19:53</div>
<div class="t" style="top:54.59px;font-size:15.6px;color:#5e5e5e;letter-spacing:-0.272px;left:531.20px;">TRANSACTIONL...</div>
<div class="t" style="top:54.59px;left:733.50px;font-size:15.6px;color:#5e5e5e;transform:scaleX(0.9284);transform-origin:0 50%;">1 KB</div>
<svg class="a" aria-hidden="true" style="left:30px;top:88px" width="16" height="20" viewBox="0 0 16 20"><path d="M1.5 .5H10.3L15.5 5.7V18C15.5 18.6 15.1 19 14.5 19H1.5C.9 19 .5 18.6 .5 18V1.5C.5 .9 .9 .5 1.5 .5Z" fill="#fbfbfb" stroke="#8e8e8e" stroke-width="1"/><path d="M10.3 .5V5.7H15.5" fill="none" stroke="#8e8e8e" stroke-width="1" stroke-linejoin="round"/></svg>
<div class="t" style="top:91.59px;font-size:15.6px;color:#1a1a1a;letter-spacing:-0.086px;left:53.40px;">User_901F728BE7A8B.253543584251...</div>
<div class="t" style="top:91.59px;font-size:15.6px;color:#5e5e5e;letter-spacing:0.375px;left:352.20px;">2025/3/21 19:53</div>
<div class="t" style="top:91.59px;font-size:15.6px;color:#5e5e5e;letter-spacing:0.226px;left:531.20px;">2535435842517...</div>
<div class="t" style="top:91.59px;left:733.50px;font-size:15.6px;color:#5e5e5e;transform:scaleX(0.9284);transform-origin:0 50%;">1 KB</div>
<svg class="a" aria-hidden="true" style="left:30px;top:125px" width="16" height="20" viewBox="0 0 16 20"><path d="M1.5 .5H10.3L15.5 5.7V18C15.5 18.6 15.1 19 14.5 19H1.5C.9 19 .5 18.6 .5 18V1.5C.5 .9 .9 .5 1.5 .5Z" fill="#fbfbfb" stroke="#8e8e8e" stroke-width="1"/><path d="M10.3 .5V5.7H15.5" fill="none" stroke="#8e8e8e" stroke-width="1" stroke-linejoin="round"/></svg>
<div class="t" style="top:128.59px;font-size:15.6px;color:#1a1a1a;letter-spacing:-0.203px;left:53.40px;">User_901F728BE7A8B_Backup.25354...</div>
<div class="t" style="top:128.59px;font-size:15.6px;color:#5e5e5e;letter-spacing:0.375px;left:352.20px;">2025/3/21 19:53</div>
<div class="t" style="top:128.59px;font-size:15.6px;color:#5e5e5e;letter-spacing:0.226px;left:531.20px;">2535435842517...</div>
<div class="t" style="top:128.59px;left:733.50px;font-size:15.6px;color:#5e5e5e;transform:scaleX(0.9284);transform-origin:0 50%;">1 KB</div>
<svg class="a" aria-hidden="true" style="left:30px;top:162px" width="16" height="20" viewBox="0 0 16 20"><path d="M1.5 .5H10.3L15.5 5.7V18C15.5 18.6 15.1 19 14.5 19H1.5C.9 19 .5 18.6 .5 18V1.5C.5 .9 .9 .5 1.5 .5Z" fill="#fbfbfb" stroke="#8e8e8e" stroke-width="1"/><path d="M10.3 .5V5.7H15.5" fill="none" stroke="#8e8e8e" stroke-width="1" stroke-linejoin="round"/></svg>
<div class="t" style="top:165.59px;font-size:15.6px;color:#1a1a1a;letter-spacing:-0.159px;left:53.40px;">User_901F728BE7A8B_Backup.Profile...</div>
<div class="t" style="top:165.59px;font-size:15.6px;color:#5e5e5e;letter-spacing:0.375px;left:352.20px;">2025/3/21 19:53</div>
<div class="t" style="top:165.59px;left:531.20px;font-size:15.6px;color:#5e5e5e;transform:scaleX(0.9173);transform-origin:0 50%;">PROFILEBACKUP...</div>
<div class="t" style="top:165.59px;font-size:15.6px;color:#5e5e5e;letter-spacing:-0.098px;left:701.50px;">2,048 KB</div>
<svg class="a" aria-hidden="true" style="left:30px;top:199px" width="16" height="20" viewBox="0 0 16 20"><path d="M1.5 .5H10.3L15.5 5.7V18C15.5 18.6 15.1 19 14.5 19H1.5C.9 19 .5 18.6 .5 18V1.5C.5 .9 .9 .5 1.5 .5Z" fill="#fbfbfb" stroke="#8e8e8e" stroke-width="1"/><path d="M10.3 .5V5.7H15.5" fill="none" stroke="#8e8e8e" stroke-width="1" stroke-linejoin="round"/></svg>
<div class="t" style="top:202.59px;font-size:15.6px;color:#1a1a1a;letter-spacing:-0.108px;left:53.40px;">User_901F728BE7A8B.ProfileBackup</div>
<div class="t" style="top:202.59px;font-size:15.6px;color:#5e5e5e;letter-spacing:0.375px;left:352.20px;">2025/3/21 19:53</div>
<div class="t" style="top:202.59px;left:531.20px;font-size:15.6px;color:#5e5e5e;transform:scaleX(0.9173);transform-origin:0 50%;">PROFILEBACKUP...</div>
<div class="t" style="top:202.59px;font-size:15.6px;color:#5e5e5e;letter-spacing:-0.098px;left:701.50px;">2,048 KB</div>
<svg class="a" aria-hidden="true" style="left:30px;top:236px" width="16" height="20" viewBox="0 0 16 20"><path d="M1.5 .5H10.3L15.5 5.7V18C15.5 18.6 15.1 19 14.5 19H1.5C.9 19 .5 18.6 .5 18V1.5C.5 .9 .9 .5 1.5 .5Z" fill="#fbfbfb" stroke="#8e8e8e" stroke-width="1"/><path d="M10.3 .5V5.7H15.5" fill="none" stroke="#8e8e8e" stroke-width="1" stroke-linejoin="round"/></svg>
<div class="t" style="top:239.59px;font-size:15.6px;color:#1a1a1a;letter-spacing:0.201px;left:53.40px;">InputTranslationManager_Profiles.Pr...</div>
<div class="t" style="top:239.59px;font-size:15.6px;color:#5e5e5e;letter-spacing:0.375px;left:352.20px;">2025/3/21 12:53</div>
<div class="t" style="top:239.59px;left:531.20px;font-size:15.6px;color:#5e5e5e;transform:scaleX(0.8904);transform-origin:0 50%;">PROFILES</div>
<div class="t c4" style="left:603.40px;top:240.10px;font-size:15.3px;color:#5e5e5e;">文件</div>
<div class="t" style="top:239.59px;font-size:15.6px;color:#5e5e5e;letter-spacing:-0.362px;left:715.90px;">123 KB</div>
<svg class="a" aria-hidden="true" style="left:30px;top:273px" width="16" height="20" viewBox="0 0 16 20"><path d="M1.5 .5H10.3L15.5 5.7V18C15.5 18.6 15.1 19 14.5 19H1.5C.9 19 .5 18.6 .5 18V1.5C.5 .9 .9 .5 1.5 .5Z" fill="#fbfbfb" stroke="#8e8e8e" stroke-width="1"/><path d="M10.3 .5V5.7H15.5" fill="none" stroke="#8e8e8e" stroke-width="1" stroke-linejoin="round"/></svg>
<div class="t" style="top:276.59px;font-size:15.6px;color:#1a1a1a;letter-spacing:0.122px;left:53.40px;">Tuning_0375_20250320153658.Data</div>
<div class="t" style="top:276.59px;font-size:15.6px;color:#5e5e5e;letter-spacing:0.355px;left:352.20px;">2025/3/20 23:37</div>
<div class="t" style="top:276.59px;font-size:15.6px;color:#5e5e5e;letter-spacing:0.499px;left:531.20px;">DATA</div>
<div class="t c4" style="left:576.90px;top:277.10px;font-size:15.3px;color:#5e5e5e;">文件</div>
<div class="t" style="top:276.59px;left:733.50px;font-size:15.6px;color:#5e5e5e;transform:scaleX(0.9284);transform-origin:0 50%;">1 KB</div>
<svg class="a" aria-hidden="true" style="left:30px;top:310px" width="16" height="20" viewBox="0 0 16 20"><path d="M1.5 .5H10.3L15.5 5.7V18C15.5 18.6 15.1 19 14.5 19H1.5C.9 19 .5 18.6 .5 18V1.5C.5 .9 .9 .5 1.5 .5Z" fill="#fbfbfb" stroke="#8e8e8e" stroke-width="1"/><path d="M10.3 .5V5.7H15.5" fill="none" stroke="#8e8e8e" stroke-width="1" stroke-linejoin="round"/><rect x="4" y="7" width="8.2" height="8.2" rx=".8" fill="#2b7bd1"/><path d="M4.6 14.6L7.3 10.8L9 12.6L10 11.6L11.8 14.6Z" fill="#8fd0f5"/><circle cx="10.1" cy="9.2" r=".85" fill="#e8f6ff"/></svg>
<div class="t" style="top:313.59px;font-size:15.6px;color:#1a1a1a;letter-spacing:0.190px;left:53.40px;">Tuning_0375_20250320153658.Thumb</div>
<div class="t" style="top:313.59px;font-size:15.6px;color:#5e5e5e;letter-spacing:0.355px;left:352.20px;">2025/3/20 23:37</div>
<div class="t" style="top:313.59px;font-size:15.6px;color:#5e5e5e;letter-spacing:-0.068px;left:531.20px;">PNG</div>
<div class="t c4" style="left:567.60px;top:314.10px;font-size:15.3px;color:#5e5e5e;">文件</div>
<div class="t" style="top:313.59px;font-size:15.6px;color:#5e5e5e;letter-spacing:-0.239px;left:723.60px;">29 KB</div>
<svg class="a" aria-hidden="true" style="left:30px;top:347px" width="16" height="20" viewBox="0 0 16 20"><path d="M1.5 .5H10.3L15.5 5.7V18C15.5 18.6 15.1 19 14.5 19H1.5C.9 19 .5 18.6 .5 18V1.5C.5 .9 .9 .5 1.5 .5Z" fill="#fbfbfb" stroke="#8e8e8e" stroke-width="1"/><path d="M10.3 .5V5.7H15.5" fill="none" stroke="#8e8e8e" stroke-width="1" stroke-linejoin="round"/></svg>
<div class="t" style="top:350.59px;font-size:15.6px;color:#1a1a1a;letter-spacing:0.122px;left:53.40px;">Tuning_1512_20250320064810.Data</div>
<div class="t" style="top:350.59px;font-size:15.6px;color:#5e5e5e;letter-spacing:0.389px;left:352.20px;">2025/3/20 14:48</div>
<div class="t" style="top:350.59px;font-size:15.6px;color:#5e5e5e;letter-spacing:0.499px;left:531.20px;">DATA</div>
<div class="t c4" style="left:576.90px;top:351.10px;font-size:15.3px;color:#5e5e5e;">文件</div>
<div class="t" style="top:350.59px;left:733.50px;font-size:15.6px;color:#5e5e5e;transform:scaleX(0.9284);transform-origin:0 50%;">1 KB</div>
<svg class="a" aria-hidden="true" style="left:30px;top:384px" width="16" height="20" viewBox="0 0 16 20"><path d="M1.5 .5H10.3L15.5 5.7V18C15.5 18.6 15.1 19 14.5 19H1.5C.9 19 .5 18.6 .5 18V1.5C.5 .9 .9 .5 1.5 .5Z" fill="#fbfbfb" stroke="#8e8e8e" stroke-width="1"/><path d="M10.3 .5V5.7H15.5" fill="none" stroke="#8e8e8e" stroke-width="1" stroke-linejoin="round"/></svg>
<div class="t" style="top:387.59px;font-size:15.6px;color:#1a1a1a;letter-spacing:0.190px;left:53.40px;">Tuning_1512_20250320064810.header</div>
<div class="t" style="top:387.59px;font-size:15.6px;color:#5e5e5e;letter-spacing:0.389px;left:352.20px;">2025/3/20 14:48</div>
<div class="t" style="top:387.59px;left:531.20px;font-size:15.6px;color:#5e5e5e;transform:scaleX(0.9429);transform-origin:0 50%;">HEADER</div>
<div class="t c4" style="left:596.00px;top:388.10px;font-size:15.3px;color:#5e5e5e;">文件</div>
<div class="t" style="top:387.59px;left:733.50px;font-size:15.6px;color:#5e5e5e;transform:scaleX(0.9284);transform-origin:0 50%;">1 KB</div>
<svg class="a" aria-hidden="true" style="left:30px;top:421px" width="16" height="20" viewBox="0 0 16 20"><path d="M1.5 .5H10.3L15.5 5.7V18C15.5 18.6 15.1 19 14.5 19H1.5C.9 19 .5 18.6 .5 18V1.5C.5 .9 .9 .5 1.5 .5Z" fill="#fbfbfb" stroke="#8e8e8e" stroke-width="1"/><path d="M10.3 .5V5.7H15.5" fill="none" stroke="#8e8e8e" stroke-width="1" stroke-linejoin="round"/><rect x="4" y="7" width="8.2" height="8.2" rx=".8" fill="#2b7bd1"/><path d="M4.6 14.6L7.3 10.8L9 12.6L10 11.6L11.8 14.6Z" fill="#8fd0f5"/><circle cx="10.1" cy="9.2" r=".85" fill="#e8f6ff"/></svg>
<div class="t" style="top:424.59px;font-size:15.6px;color:#1a1a1a;letter-spacing:0.190px;left:53.40px;">Tuning_1512_20250320064810.Thumb</div>
<div class="t" style="top:424.59px;font-size:15.6px;color:#5e5e5e;letter-spacing:0.389px;left:352.20px;">2025/3/20 14:48</div>
<div class="t" style="top:424.59px;font-size:15.6px;color:#5e5e5e;letter-spacing:-0.068px;left:531.20px;">PNG</div>
<div class="t c4" style="left:567.60px;top:425.10px;font-size:15.3px;color:#5e5e5e;">文件</div>
<div class="t" style="top:424.59px;font-size:15.6px;color:#5e5e5e;letter-spacing:-0.239px;left:723.60px;">29 KB</div>
<svg class="a" aria-hidden="true" style="left:30px;top:458px" width="16" height="20" viewBox="0 0 16 20"><path d="M1.5 .5H10.3L15.5 5.7V18C15.5 18.6 15.1 19 14.5 19H1.5C.9 19 .5 18.6 .5 18V1.5C.5 .9 .9 .5 1.5 .5Z" fill="#fbfbfb" stroke="#8e8e8e" stroke-width="1"/><path d="M10.3 .5V5.7H15.5" fill="none" stroke="#8e8e8e" stroke-width="1" stroke-linejoin="round"/></svg>
<div class="t" style="top:461.59px;font-size:15.6px;color:#1a1a1a;letter-spacing:0.122px;left:53.40px;">Tuning_2563_20250319151144.Data</div>
<div class="t" style="top:461.59px;font-size:15.6px;color:#5e5e5e;letter-spacing:0.275px;left:352.20px;">2025/3/19 23:11</div>
<div class="t" style="top:461.59px;font-size:15.6px;color:#5e5e5e;letter-spacing:0.499px;left:531.20px;">DATA</div>
<div class="t c4" style="left:576.90px;top:462.10px;font-size:15.3px;color:#5e5e5e;">文件</div>
<div class="t" style="top:461.59px;left:733.50px;font-size:15.6px;color:#5e5e5e;transform:scaleX(0.9284);transform-origin:0 50%;">1 KB</div>
<svg class="a" aria-hidden="true" style="left:30px;top:495px" width="16" height="20" viewBox="0 0 16 20"><path d="M1.5 .5H10.3L15.5 5.7V18C15.5 18.6 15.1 19 14.5 19H1.5C.9 19 .5 18.6 .5 18V1.5C.5 .9 .9 .5 1.5 .5Z" fill="#fbfbfb" stroke="#8e8e8e" stroke-width="1"/><path d="M10.3 .5V5.7H15.5" fill="none" stroke="#8e8e8e" stroke-width="1" stroke-linejoin="round"/></svg>
<div class="t" style="top:498.59px;font-size:15.6px;color:#1a1a1a;letter-spacing:0.190px;left:53.40px;">Tuning_2563_20250319151144.header</div>
<div class="t" style="top:498.59px;font-size:15.6px;color:#5e5e5e;letter-spacing:0.275px;left:352.20px;">2025/3/19 23:11</div>
<div class="t" style="top:498.59px;left:531.20px;font-size:15.6px;color:#5e5e5e;transform:scaleX(0.9429);transform-origin:0 50%;">HEADER</div>
<div class="t c4" style="left:596.00px;top:499.10px;font-size:15.3px;color:#5e5e5e;">文件</div>
<div class="t" style="top:498.59px;left:733.50px;font-size:15.6px;color:#5e5e5e;transform:scaleX(0.9284);transform-origin:0 50%;">1 KB</div>
<svg class="a" aria-hidden="true" style="left:30px;top:532px" width="16" height="20" viewBox="0 0 16 20"><path d="M1.5 .5H10.3L15.5 5.7V18C15.5 18.6 15.1 19 14.5 19H1.5C.9 19 .5 18.6 .5 18V1.5C.5 .9 .9 .5 1.5 .5Z" fill="#fbfbfb" stroke="#8e8e8e" stroke-width="1"/><path d="M10.3 .5V5.7H15.5" fill="none" stroke="#8e8e8e" stroke-width="1" stroke-linejoin="round"/><rect x="4" y="7" width="8.2" height="8.2" rx=".8" fill="#2b7bd1"/><path d="M4.6 14.6L7.3 10.8L9 12.6L10 11.6L11.8 14.6Z" fill="#8fd0f5"/><circle cx="10.1" cy="9.2" r=".85" fill="#e8f6ff"/></svg>
<div class="t" style="top:535.59px;font-size:15.6px;color:#1a1a1a;letter-spacing:0.190px;left:53.40px;">Tuning_2563_20250319151144.Thumb</div>
<div class="t" style="top:535.59px;font-size:15.6px;color:#5e5e5e;letter-spacing:0.275px;left:352.20px;">2025/3/19 23:11</div>
<div class="t" style="top:535.59px;font-size:15.6px;color:#5e5e5e;letter-spacing:-0.068px;left:531.20px;">PNG</div>
<div class="t c4" style="left:567.60px;top:536.10px;font-size:15.3px;color:#5e5e5e;">文件</div>
<div class="t" style="top:535.59px;font-size:15.6px;color:#5e5e5e;letter-spacing:-0.239px;left:723.60px;">29 KB</div>
</div>
<svg class="a" aria-hidden="true" style="left:214px;top:229px;" width="760" height="13" viewBox="0 0 760 13"><path d="M7.8 6.7C120 6.2 400 6.5 751 6.3" stroke="#ea0a0a" stroke-width="5.5" fill="none" stroke-linecap="round"/></svg>
<div class="t" style="top:741.65px;font-size:15.3px;color:#2b3850;letter-spacing:0.103px;left:15.20px;">1,670</div>
<div class="t c5" style="left:58.00px;top:741.60px;font-size:15px;color:#2b3850;letter-spacing:-0.225px;">个项目</div>
<div class="a" style="left:115px;top:745px;width:1px;height:13px;background:#ececec;"></div>
<svg class="a" aria-hidden="true" style="left:1117px;top:709px;" width="50" height="48" viewBox="0 0 50 48"><defs><clipPath id="wmc"><circle cx="23.6" cy="24.1" r="17.3"/></clipPath></defs>
<circle cx="23.6" cy="24.1" r="18.9" stroke="#f0a02c" stroke-width="1.45" fill="none"/>
<g clip-path="url(#wmc)" stroke="#1fa6a8" fill="none"><path d="M0 22.99L36 5.20M0 28.65L36 9.97M0 34.06L36 15.59M0 41.64L36 21.56M0 48.59L36 27.19" stroke-width="2.15"/><path d="M0 23.99L18.6 14.80M0 29.65L19.2 19.69M0 35.06L21.0 24.29M0 42.64L24.4 29.03M0 49.59L30.1 31.69" stroke-width="3.9"/></g>
<path d="M26 10.14L35.00 5.69M30 13.09L39.54 8.14M30 18.67L42.88 12.06M30 24.90L44.70 16.70M30 30.75L45.00 21.84" stroke="#1fa6a8" stroke-width="2.15" fill="none" stroke-linecap="round"/>
<path d="M9 15.6Q12.8 8.6 20.8 7.2Q17.2 14.2 9 15.6Z" fill="#1fa6a8"/>
<path d="M22.2 40.5Q28 34.2 36.8 34.1Q31.5 40.8 22.2 40.5Z" fill="#1fa6a8"/></svg>
<div class="t cs" style="left:1168.00px;top:714.60px;font-size:25px;color:#1fa6a8;letter-spacing:0.125px;">奇辉拓游网</div>
<div class="t" style="top:742.58px;font-size:9px;color:#3aaeb0;letter-spacing:-0.329px;left:1172.00px;">- QIHUI TUOYOU NETWORK -</div>
</body></html>
